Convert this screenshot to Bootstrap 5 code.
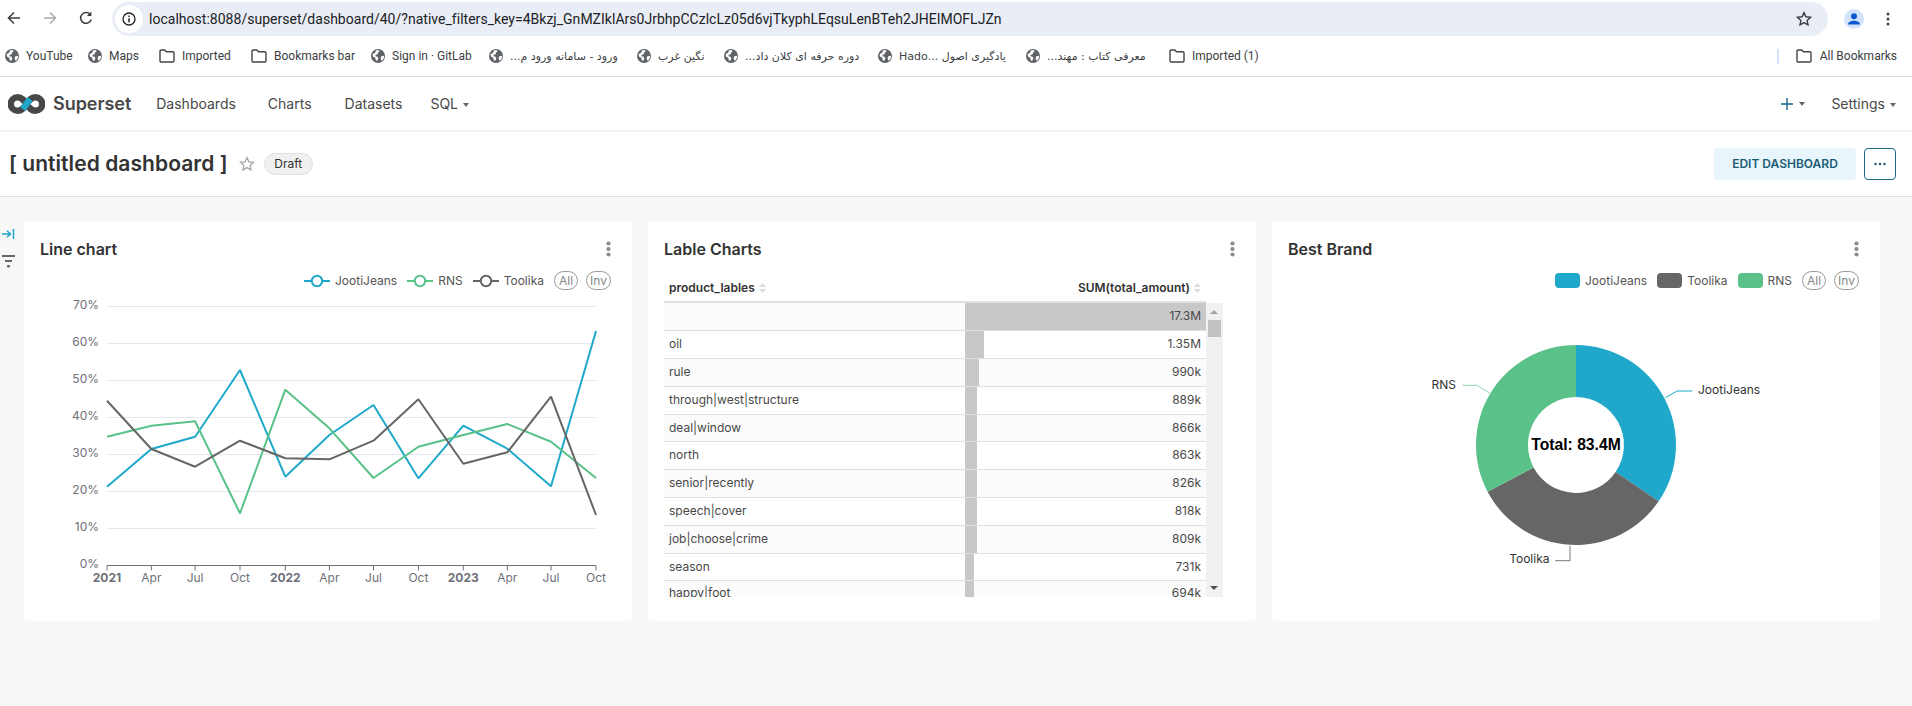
<!DOCTYPE html>
<html lang="en">
<head>
<meta charset="utf-8">
<title>Superset</title>
<link href="https://cdn.jsdelivr.net/npm/bootstrap@5.3.0/dist/css/bootstrap.min.css" rel="stylesheet">
<style>
html,body{height:706px;overflow:hidden}
body{font-family:Inter,"Liberation Sans",sans-serif;background:#f7f7f7;color:#323232;font-size:14px}
.chrome-bar{height:36px;background:#fff;padding-left:6px}
.nav-glyphs{gap:20px;margin-right:18px;height:36px}
.omnibox{width:1716px;height:34px;margin-top:2px;border-radius:17px;background:#e9edf6;padding-left:3px;padding-right:16px}
.info-dot{width:28px;height:28px;border-radius:50%;background:#fff;margin-right:6px}
.url-text{font:14px Roboto,"Liberation Sans",sans-serif;color:#202124;white-space:nowrap;letter-spacing:.02px}
.chrome-right{gap:16px;margin-left:16px;height:38px}
.bm-bar{height:41px;background:#fff;border-bottom:1px solid #dfdfdf;padding-left:5px;padding-right:15px;font:12px Roboto,"DejaVu Sans",sans-serif;color:#3c4043;white-space:nowrap}
.bm-item{flex:none}
.bm-item svg{margin-right:7px;flex:none}
.bm-fa{font-size:11px;font-family:"DejaVu Sans",sans-serif}
.bm-item:nth-child(1){width:83px}.bm-item:nth-child(2){width:71px}.bm-item:nth-child(3){width:92px}
.bm-item:nth-child(4){width:120px}.bm-item:nth-child(5){width:118px}.bm-item:nth-child(6){width:148px}
.bm-item:nth-child(7){width:87px}.bm-item:nth-child(8){width:154px}.bm-item:nth-child(9){width:148px}
.bm-item:nth-child(10){width:143px}
.bm-rule{width:2px;height:15px;background:#d3e3fd;margin-right:17px}
.top-nav{height:55px;background:#fff;border-bottom:2px solid #f3f3f3;padding:0 16px 0 8px}
.brand-word{font-size:18px;font-weight:600;color:#484848;line-height:1;margin-left:8px;letter-spacing:-.05px}
.menu-row{gap:32px;margin-left:25px}
.menu-row li:nth-child(3){margin-left:1px}
.menu-row li:nth-child(4){margin-left:-4px}
.menu-row .nav-link,.menu-right .nav-link{padding:0;color:#484848;font-size:14px;line-height:20px}
.tri{display:inline-block;width:0;height:0;border-left:3px solid transparent;border-right:3px solid transparent;border-top:4px solid #666;margin-left:5px;vertical-align:2px}
.menu-right{gap:26px}
.dash-head{height:65px;background:#fff;border-bottom:1px solid #e0e0e0;padding:0 16px 0 9px}
.dash-title{font-size:21px;font-weight:600;color:#323232;margin:0;line-height:28px;white-space:nowrap;letter-spacing:.06px}
.star-wrap{margin:0 9px 0 11px}
.draft-pill{height:22px;width:49px;border-radius:11px;background:#f0f0f0;border:1px solid #e0e0e0;color:#323232;font-size:12px;font-weight:400;padding:0}
.edit-btn{width:142px;height:32px;background:#e8f5fa;color:#1a5b75;border:0;border-radius:4px;font-size:12px;font-weight:600;padding:0}
.more-btn{width:32px;height:32px;background:#fff;border:1px solid #1a6a85;border-radius:4px;margin-left:8px;padding:0;line-height:1}
.dash-main{padding-top:24px}
.side-rail{width:24px;flex:none;padding-top:7px;padding-left:1px;gap:15px}
.chart-row{gap:16px;padding-right:32px}
.chart-card{width:608px;height:400px;border:0;border-radius:4px;background:#fff;flex:none}
.card-top{padding:16px 21.500px 0 16px;height:40px}
.card-name{font-size:16px;font-weight:600;color:#323232;line-height:24px;margin:0}
.legend-row{height:19px;margin-top:10px;padding-right:21px;gap:10px;font-size:12px;color:#555;line-height:19px}
.leg-item{gap:4px}
.leg-item svg{margin-right:1px}
.leg-swatch{width:25px;height:15px;border-radius:4px;margin-right:1px}
.sw-blue{background:#1fa8c9}.sw-gray{background:#666}.sw-green{background:#5ac189}
.leg-pill{height:19px;border:1px solid #999;border-radius:10px;color:#888;font-size:12px;line-height:17px;padding:0 3px}
.leg-pill.leg-gap{margin-right:-2px;padding:0 4px}
.plot{display:block;margin-top:6px}
.plot text{font-family:Inter,"Liberation Sans",sans-serif;font-size:12px;fill:#6e7079}
.plot .yr{font-weight:700}
.plot .pie-label{fill:#333}
.plot .pie-total{font-family:"Liberation Sans",Arial,sans-serif;font-weight:700;font-size:15.7px;fill:#000}
.table-zone{margin:13px 0 0 16px;width:559px;font-size:12px}
.head-grid{width:542px;margin:0;table-layout:fixed}
.head-grid th{height:28px;padding:0 5px;border-bottom:2px solid #e0e0e0;font-weight:600;color:#323232;font-size:12px;vertical-align:middle;background:transparent}
.sort-ic{margin-left:4px}
.body-clip{height:294px;overflow:hidden}
.body-box{width:542px;overflow:hidden}
.data-grid{width:542px;margin:0;table-layout:fixed;color:#484848}
.data-grid td{height:28px;padding:0 5px;border-bottom:1px solid #e0e0e0;font-size:12px;vertical-align:middle;line-height:1;background-color:transparent;white-space:nowrap;box-shadow:none}
.data-grid tr:nth-child(odd) td{background-color:#fbfbfb}
.data-grid tr:nth-child(even) td{background-color:#fff}
.data-grid tr:nth-child(1) td,.data-grid tr:nth-child(10) td,.data-grid tr:nth-child(5) td{height:27px}
.data-grid td.bar-cell{text-align:right;background-image:linear-gradient(to right,#c8c8c8 var(--bw),transparent var(--bw));background-clip:padding-box}
.cut-row td{vertical-align:top !important;padding-top:6px !important}
.fake-scroll{width:17px;height:294px;background:#f1f1f1;flex:none}
.scroll-thumb{width:13px;height:17px;background:#c1c1c1;margin:17px auto 0}
.scroll-up,.scroll-down{width:0;height:0;border-left:4px solid transparent;border-right:4px solid transparent;position:absolute;left:4px}
.scroll-up{border-bottom:4px solid #a3a3a3;top:7px}
.scroll-down{border-top:4px solid #505050;bottom:7px}
.col-a{width:301px}.col-b{width:241px}
</style>
</head>
<body>
<div class="chrome-bar d-flex align-items-start">
  <div class="d-flex align-items-center nav-glyphs">
    <svg width="16" height="16" viewBox="0 0 16 16" fill="none" stroke="#3c4043" stroke-width="1.6"><path d="M14 8H2.500M8 2.500 2.500 8 8 13.500"/></svg>
    <svg width="16" height="16" viewBox="0 0 16 16" fill="none" stroke="#a9abae" stroke-width="1.6"><path d="M2 8h11.500M8 2.500 13.500 8 8 13.500"/></svg>
    <svg width="16" height="16" viewBox="0 0 16 16" fill="none" stroke="#3c4043" stroke-width="1.6"><path d="M13.200 9.500A5.400 5.400 0 1 1 12 4.200"/><path d="M13.400 1.400v4.600H8.900z" fill="#3c4043" stroke="none"/></svg>
  </div>
  <div class="omnibox d-flex align-items-center">
    <div class="info-dot d-flex align-items-center justify-content-center">
      <svg width="14" height="14" viewBox="0 0 14 14" fill="none" stroke="#202124" stroke-width="1.3"><circle cx="7" cy="7" r="6"/><path d="M7 6.200v4M7 3.600v1.400" stroke-width="1.5"/></svg>
    </div>
    <span class="url-text">localhost:8088/superset/dashboard/40/?native_filters_key=4Bkzj_GnMZIklArs0JrbhpCCzlcLz05d6vjTkyphLEqsuLenBTeh2JHEIMOFLJZn</span>
    <svg class="ms-auto" width="16" height="16" viewBox="0 0 16 16" fill="none" stroke="#3c4043" stroke-width="1.4"><path d="m8 1.600 1.900 4.200 4.600.5-3.400 3.100.9 4.500L8 11.600l-4 2.300.9-4.500L1.500 6.300l4.600-.5z"/></svg>
  </div>
  <div class="d-flex align-items-center chrome-right">
    <svg width="20" height="20" viewBox="0 0 20 20"><circle cx="10" cy="10" r="10" fill="#d3e3fd"/><circle cx="10" cy="7.300" r="3" fill="#0b57d0"/><path d="M4 15.600c0-2.600 3-3.800 6-3.800s6 1.200 6 3.800z" fill="#0b57d0"/></svg>
    <svg width="16" height="16" viewBox="0 0 16 16" fill="#444"><circle cx="8" cy="3" r="1.500"/><circle cx="8" cy="8" r="1.500"/><circle cx="8" cy="13" r="1.500"/></svg>
  </div>
</div>

<svg width="0" height="0" class="position-absolute">
  <symbol id="globe" viewBox="0 0 14 14"><circle cx="7" cy="7" r="7" fill="#5f6368"/><path d="M1.600 5.200 4.400 3.600l.4-2.200 2.800-.5 1 1.300-1.700 1.600-.4 1.600-1.900.4-.1 1.500 2.100.5.8 1.600-1.200 2.400-1.400-.4-.5-2.700-2.400-1.300zM10.300 7.200l2.400-.5.5 1.300-1.400 3-1.500.6-.7-2.400z" fill="#fff"/></symbol>
  <symbol id="folder" viewBox="0 0 16 14"><path d="M1 2.200C1 1.500 1.500 1 2.200 1h3.600l1.600 1.700h6.400c.7 0 1.200.5 1.200 1.200v7.900c0 .7-.5 1.200-1.200 1.200H2.200c-.7 0-1.200-.5-1.200-1.200z" fill="none" stroke="#444" stroke-width="1.4"/></symbol>
</svg>

<div class="bm-bar d-flex align-items-center">
  <div class="bm-item d-flex align-items-center"><svg width="14" height="14"><use href="#globe"/></svg>YouTube</div>
  <div class="bm-item d-flex align-items-center"><svg width="14" height="14"><use href="#globe"/></svg>Maps</div>
  <div class="bm-item d-flex align-items-center"><svg width="16" height="14"><use href="#folder"/></svg>Imported</div>
  <div class="bm-item d-flex align-items-center"><svg width="16" height="14"><use href="#folder"/></svg>Bookmarks bar</div>
  <div class="bm-item d-flex align-items-center"><svg width="14" height="14"><use href="#globe"/></svg>Sign in · GitLab</div>
  <div class="bm-item d-flex align-items-center"><svg width="14" height="14"><use href="#globe"/></svg><span class="bm-fa" dir="rtl">ورود - سامانه ورود م...</span></div>
  <div class="bm-item d-flex align-items-center"><svg width="14" height="14"><use href="#globe"/></svg><span class="bm-fa" dir="rtl">نگین غرب</span></div>
  <div class="bm-item d-flex align-items-center"><svg width="14" height="14"><use href="#globe"/></svg><span class="bm-fa" dir="rtl">دوره حرفه ای کلان داد...</span></div>
  <div class="bm-item d-flex align-items-center"><svg width="14" height="14"><use href="#globe"/></svg><span class="bm-fa" dir="rtl">یادگیری اصول ...Hado</span></div>
  <div class="bm-item d-flex align-items-center"><svg width="14" height="14"><use href="#globe"/></svg><span class="bm-fa" dir="rtl">معرفی کتاب : مهند...</span></div>
  <div class="bm-item d-flex align-items-center"><svg width="16" height="14"><use href="#folder"/></svg>Imported (1)</div>
  <div class="ms-auto d-flex align-items-center">
    <span class="bm-rule"></span>
    <svg width="16" height="14" class="me-2"><use href="#folder"/></svg>All Bookmarks
  </div>
</div>

<nav class="navbar top-nav d-flex align-items-center justify-content-between flex-nowrap">
  <div class="d-flex align-items-center">
    <a class="d-flex align-items-center text-decoration-none" href="#">
      <svg width="37" height="20" viewBox="0 0 37 20" fill="none">
        <path d="M18.500 10C15.500 5.800 13.600 3.200 9.600 3.200a6.800 6.800 0 0 0 0 13.600c4 0 5.900-2.600 8.900-6.800s4.900-6.800 8.900-6.800a6.800 6.800 0 0 1 0 13.600c-4 0-5.900-2.600-8.900-6.800z" stroke="#484848" stroke-width="6.400"/>
        <path d="M14.800 15 22.200 5" stroke="#20a7c9" stroke-width="6.400"/>
      </svg>
      <span class="brand-word">Superset</span>
    </a>
    <ul class="nav menu-row flex-nowrap">
      <li class="nav-item"><a class="nav-link" href="#">Dashboards</a></li>
      <li class="nav-item"><a class="nav-link" href="#">Charts</a></li>
      <li class="nav-item"><a class="nav-link" href="#">Datasets</a></li>
      <li class="nav-item"><a class="nav-link" href="#">SQL<span class="tri"></span></a></li>
    </ul>
  </div>
  <ul class="nav menu-right flex-nowrap align-items-center">
    <li class="nav-item d-flex align-items-center"><svg width="14" height="14" viewBox="0 0 14 14" stroke="#1a6a85" stroke-width="1.4"><path d="M7 1v12M1 7h12"/></svg><span class="tri"></span></li>
    <li class="nav-item"><a class="nav-link" href="#">Settings<span class="tri"></span></a></li>
  </ul>
</nav>

<header class="dash-head d-flex align-items-center justify-content-between">
  <div class="d-flex align-items-center">
    <h1 class="dash-title">[ untitled dashboard ]</h1>
    <span class="star-wrap d-flex"><svg width="16" height="16" viewBox="0 0 16 16" fill="none" stroke="#a8a8a8" stroke-width="1.3"><path d="m8 1.600 1.900 4.200 4.600.5-3.400 3.100.9 4.500L8 11.600l-4 2.300.9-4.500L1.500 6.300l4.600-.5z"/></svg></span>
    <span class="badge draft-pill d-flex align-items-center justify-content-center">Draft</span>
  </div>
  <div class="d-flex align-items-center">
    <button class="btn edit-btn" type="button">EDIT DASHBOARD</button>
    <button class="btn more-btn d-flex align-items-center justify-content-center" type="button" aria-label="More"><svg width="14" height="4" viewBox="0 0 14 4" fill="#1a5b75"><circle cx="2.500" cy="2" r="1.200"/><circle cx="7" cy="2" r="1.200"/><circle cx="11.500" cy="2" r="1.200"/></svg></button>
  </div>
</header>

<main class="dash-main d-flex">
  <aside class="side-rail d-flex flex-column">
    <svg width="14" height="12" viewBox="0 0 14 12" fill="none" stroke="#20a7c9" stroke-width="1.5"><path d="M1 6h8M6 2.800 9.500 6 6 9.200M12.500 1v10"/></svg>
    <svg width="15" height="13" viewBox="0 0 15 13" fill="#666"><rect x="1" y="0" width="13" height="2"/><rect x="4" y="5" width="7" height="2"/><rect x="6" y="10" width="3" height="2.500" rx="1"/></svg>
  </aside>
  <div class="chart-row d-flex">
    <section class="card chart-card">
      <div class="card-top d-flex justify-content-between align-items-start">
        <h2 class="card-name">Line chart</h2>
        <svg class="mt-1" width="5" height="16" viewBox="0 0 5 16" fill="#8c8c8c"><circle cx="2.500" cy="2.500" r="2.100"/><circle cx="2.500" cy="8" r="2.100"/><circle cx="2.500" cy="13.500" r="2.100"/></svg>
      </div>
      <div class="legend-row d-flex justify-content-end align-items-center">
        <span class="leg-item d-flex align-items-center"><svg width="26" height="14" viewBox="0 0 26 14" fill="#fff" stroke="#1fa8c9" stroke-width="2"><path d="M0 7h26"/><circle cx="13" cy="7" r="5.200"/></svg>JootiJeans</span>
        <span class="leg-item d-flex align-items-center"><svg width="26" height="14" viewBox="0 0 26 14" fill="#fff" stroke="#5ac189" stroke-width="2"><path d="M0 7h26"/><circle cx="13" cy="7" r="5.200"/></svg>RNS</span>
        <span class="leg-item d-flex align-items-center"><svg width="26" height="14" viewBox="0 0 26 14" fill="#fff" stroke="#666" stroke-width="2"><path d="M0 7h26"/><circle cx="13" cy="7" r="5.200"/></svg>Toolika</span>
        <span class="leg-pill leg-gap">All</span>
        <span class="leg-pill">Inv</span>
      </div>
      <svg class="plot" width="608" height="325" viewBox="24 296 608 325">
        <g stroke="#e3e8f3" stroke-width="1">
          <path d="M107 306.500H596M107 343.500H596M107 380.500H596M107 417.500H596M107 454.500H596M107 491.500H596M107 528.500H596"/>
        </g>
        <path d="M107 565.500H596M107 565.500v5M151.400 565.500v5M195.100 565.500v5M240 565.500v5M285.300 565.500v5M329.400 565.500v5M373.500 565.500v5M418.400 565.500v5M463.300 565.500v5M507.300 565.500v5M551 565.500v5M596 565.500v5" stroke="#6e7079" fill="none"/>
        <g text-anchor="end">
          <text x="99" y="309">70%</text><text x="99" y="346">60%</text><text x="99" y="383">50%</text><text x="99" y="420">40%</text><text x="99" y="457">30%</text><text x="99" y="494">20%</text><text x="99" y="531">10%</text><text x="99" y="568">0%</text>
        </g>
        <g text-anchor="middle">
          <text class="yr" x="107" y="582">2021</text><text x="151.400" y="582">Apr</text><text x="195.100" y="582">Jul</text><text x="240" y="582">Oct</text>
          <text class="yr" x="285.300" y="582">2022</text><text x="329.400" y="582">Apr</text><text x="373.500" y="582">Jul</text><text x="418.400" y="582">Oct</text>
          <text class="yr" x="463.300" y="582">2023</text><text x="507.300" y="582">Apr</text><text x="551" y="582">Jul</text><text x="596" y="582">Oct</text>
        </g>
        <g fill="none" stroke-width="2" stroke-linejoin="bevel">
          <polyline stroke="#1fa8c9" points="107,486.700 151.400,449 195.100,436.700 240,370 285.300,476.700 329.400,435 373.500,405 418.400,478.300 463.300,425.700 507.300,448.700 551,486.300 596,331"/>
          <polyline stroke="#5ac189" points="107,436.700 151.400,425.700 195.100,421.300 240,513.300 285.300,389.700 329.400,428.300 373.500,478 418.400,446.700 463.300,435 507.300,424 551,441.700 596,478"/>
          <polyline stroke="#666" points="107,400.700 151.400,449 195.100,466.700 240,440.700 285.300,458.300 329.400,459.300 373.500,440.700 418.400,399.300 463.300,463.700 507.300,452.300 551,396.700 596,515"/>
        </g>
      </svg>
    </section>

    <section class="card chart-card">
      <div class="card-top d-flex justify-content-between align-items-start">
        <h2 class="card-name">Lable Charts</h2>
        <svg class="mt-1" width="5" height="16" viewBox="0 0 5 16" fill="#8c8c8c"><circle cx="2.500" cy="2.500" r="2.100"/><circle cx="2.500" cy="8" r="2.100"/><circle cx="2.500" cy="13.500" r="2.100"/></svg>
      </div>
      <div class="table-zone">
        <table class="table head-grid">
          <colgroup><col class="col-a"><col class="col-b"></colgroup>
          <thead><tr>
            <th><span class="d-flex align-items-center">product_lables<svg class="sort-ic" width="7" height="10" viewBox="0 0 7 10" fill="#dcdcdc"><path d="M3.500 0 7 4H0zM3.500 10 0 6h7z"/></svg></span></th>
            <th><span class="d-flex align-items-center justify-content-end">SUM(total_amount)<svg class="sort-ic" width="7" height="10" viewBox="0 0 7 10" fill="#dcdcdc"><path d="M3.500 0 7 4H0zM3.500 10 0 6h7z"/></svg></span></th>
          </tr></thead>
        </table>
        <div class="d-flex body-clip">
          <div class="body-box">
            <table class="table data-grid">
              <colgroup><col class="col-a"><col class="col-b"></colgroup>
              <tbody>
                <tr><td></td><td class="bar-cell" style="--bw:241px">17.3M</td></tr>
                <tr><td>oil</td><td class="bar-cell" style="--bw:19px">1.35M</td></tr>
                <tr><td>rule</td><td class="bar-cell" style="--bw:14px">990k</td></tr>
                <tr><td>through|west|structure</td><td class="bar-cell" style="--bw:12px">889k</td></tr>
                <tr><td>deal|window</td><td class="bar-cell" style="--bw:12px">866k</td></tr>
                <tr><td>north</td><td class="bar-cell" style="--bw:12px">863k</td></tr>
                <tr><td>senior|recently</td><td class="bar-cell" style="--bw:12px">826k</td></tr>
                <tr><td>speech|cover</td><td class="bar-cell" style="--bw:12px">818k</td></tr>
                <tr><td>job|choose|crime</td><td class="bar-cell" style="--bw:12px">809k</td></tr>
                <tr><td>season</td><td class="bar-cell" style="--bw:9px">731k</td></tr>
                <tr class="cut-row"><td>happy|foot</td><td class="bar-cell" style="--bw:9px">694k</td></tr>
              </tbody>
            </table>
          </div>
          <div class="fake-scroll position-relative">
            <span class="scroll-up"></span>
            <div class="scroll-thumb"></div>
            <span class="scroll-down"></span>
          </div>
        </div>
      </div>
    </section>

    <section class="card chart-card">
      <div class="card-top d-flex justify-content-between align-items-start">
        <h2 class="card-name">Best Brand</h2>
        <svg class="mt-1" width="5" height="16" viewBox="0 0 5 16" fill="#8c8c8c"><circle cx="2.500" cy="2.500" r="2.100"/><circle cx="2.500" cy="8" r="2.100"/><circle cx="2.500" cy="13.500" r="2.100"/></svg>
      </div>
      <div class="legend-row d-flex justify-content-end align-items-center">
        <span class="leg-item d-flex align-items-center"><span class="leg-swatch sw-blue"></span>JootiJeans</span>
        <span class="leg-item d-flex align-items-center"><span class="leg-swatch sw-gray"></span>Toolika</span>
        <span class="leg-item d-flex align-items-center"><span class="leg-swatch sw-green"></span>RNS</span>
        <span class="leg-pill leg-gap">All</span>
        <span class="leg-pill">Inv</span>
      </div>
      <svg class="plot" width="608" height="325" viewBox="1272 296 608 325">
        <path d="M1576 345A100 100 0 0 1 1658.600 501.350L1615.600 472A48 48 0 0 0 1576 397z" fill="#1fa8c9"/>
        <path d="M1658.600 501.350A100 100 0 0 1 1487.600 491.800L1533.600 467.500A48 48 0 0 0 1615.600 472z" fill="#666"/>
        <path d="M1487.600 491.800A100 100 0 0 1 1576 345V397A48 48 0 0 0 1533.600 467.500z" fill="#5ac189"/>
        <g fill="none" stroke-width="1">
          <path d="M1665.400 397.700 1677 391H1692.400" stroke="#1fa8c9"/>
          <path d="M1462.500 385.300H1477L1490 393.300" stroke="#8fd6ae"/>
          <path d="M1555.200 560.700H1570V545.700" stroke="#777"/>
        </g>
        <text class="pie-label" x="1698" y="394">JootiJeans</text>
        <text class="pie-label" x="1456" y="389" text-anchor="end">RNS</text>
        <text class="pie-label" x="1549.500" y="563" text-anchor="end">Toolika</text>
        <text class="pie-total" x="1576" y="450" text-anchor="middle">Total: 83.4M</text>
      </svg>
    </section>
  </div>
</main>
<script src="https://cdn.jsdelivr.net/npm/bootstrap@5.3.0/dist/js/bootstrap.bundle.min.js"></script>
</body>
</html>
